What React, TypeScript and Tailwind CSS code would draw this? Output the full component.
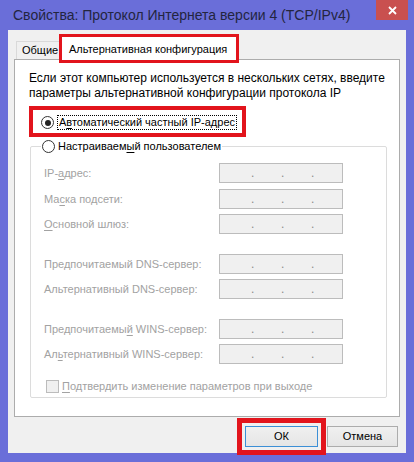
import React from "react";

const font = { fontFamily: '"Liberation Sans", "Noto Sans", sans-serif' };

function IpField() {
  return (
    <div className="w-[124px] h-[20px] border border-[#bcbcbc] bg-[#f0f0f0] flex items-end pl-[31px] pb-[3px] text-[#8a8a8a] text-[12px] leading-[12px]">
      <span className="w-[30px]">.</span>
      <span className="w-[30px]">.</span>
      <span className="w-[30px]">.</span>
    </div>
  );
}

function Row({ label, mt }: { label: React.ReactNode; mt: string }) {
  return (
    <div className={`flex items-center h-[20px] ${mt}`}>
      <div className="w-[188px] pl-[13px] text-[#a2a2a2] whitespace-nowrap">{label}</div>
      <IpField />
    </div>
  );
}

function Radio({ checked }: { checked?: boolean }) {
  return (
    <span className="w-[13px] h-[13px] rounded-full border border-[#333] bg-white flex items-center justify-center shrink-0">
      {checked && <span className="w-[6px] h-[6px] rounded-full bg-[#222]" />}
    </span>
  );
}

export default function App() {
  return (
    <div className="w-[414px] h-[462px] bg-[#6a6ed9] flex flex-col text-[11px] leading-[15px] text-black" style={font}>
      {/* TITLE BAR */}
      <div className="h-[30px] flex items-start shrink-0">
        <div className="pl-[13px] pt-[5px] text-[14px] leading-[20px] text-[#23253f] whitespace-nowrap">
          Свойства: Протокол Интернета версии 4 (TCP/IPv4)
        </div>
        <div className="ml-auto mr-[6px] w-[32px] h-[20px] bg-[#c9504f] flex items-center justify-center">
          <svg width="9" height="9" viewBox="0 0 9 9">
            <path d="M1 1 L8 8 M8 1 L1 8" stroke="white" strokeWidth="1.8" />
          </svg>
        </div>
      </div>

      {/* CLIENT */}
      <div className="mx-[8px] h-[423px] bg-[#f0f0f0] flex flex-col shrink-0">
        {/* tabs */}
        <div className="flex items-end h-[29px] pl-[8px] relative z-10">
          <div className="w-[45px] h-[18px] border border-b-0 border-[#d9d9d9] bg-[#f0f0f0] pl-[5px] leading-[17px]">
            Общие
          </div>
          <div className="ml-[1px] w-[174px] h-[23px] -mb-[1px] bg-white pl-[7px] pt-[5px] outline-[3px] outline-[#e2141c] whitespace-nowrap">
            Альтернативная конфигурация
          </div>
        </div>

        {/* panel */}
        <div className="mx-[6px] h-[358px] border border-[#acacac] bg-white flex flex-col">
          <div className="pl-[14px] pt-[11px] text-[12px] whitespace-nowrap">
            <div>Если этот компьютер используется в нескольких сетях, введите</div>
            <div>параметры альтернативной конфигурации протокола IP</div>
          </div>

          <div className="ml-[18px] mt-[9px] w-[209px] h-[23px] flex items-center gap-[3px] pl-[8px] pt-[2px] outline-4 outline-offset-0 outline-[#e2141c]">
            <Radio checked />
            <span className="border border-dotted border-black px-[1px] leading-[13px] whitespace-nowrap">
              А<span className="underline underline-offset-[2px]">в</span>томатический частный IP-адрес
            </span>
          </div>

          <fieldset className="ml-[15px] mr-[12px] mt-[5px] border border-[#dcdcdc] rounded-[2px] px-[10px] pb-[4px] text-[#a2a2a2]">
            <legend className="px-[1px] flex items-center gap-[3px] text-black leading-[16px] whitespace-nowrap">
              <Radio />
              <span>
                Настраиваем<span className="underline underline-offset-[2px]">ы</span>й пользователем
              </span>
            </legend>
            <div className="-mx-[10px]">
              <Row mt="mt-[9px]" label={<>IP-<span className="underline underline-offset-[2px]">а</span>дрес:</>} />
              <Row mt="mt-[6px]" label={<>Ма<span className="underline underline-offset-[2px]">с</span>ка подсети:</>} />
              <Row mt="mt-[5px]" label={<><span className="underline underline-offset-[2px]">О</span>сновной шлюз:</>} />
              <Row mt="mt-[20px]" label={<>Пре<span className="underline underline-offset-[2px]">д</span>почитаемый DNS-сервер:</>} />
              <Row mt="mt-[5px]" label={<>Альтернативный DNS-сервер:</>} />
              <Row mt="mt-[20px]" label={<>Предпочитаемы<span className="underline underline-offset-[2px]">й</span> WINS-сервер:</>} />
              <Row mt="mt-[5px]" label={<>Ал<span className="underline underline-offset-[2px]">ь</span>тернативный WINS-сервер:</>} />
              <div className="flex items-center gap-[3px] pl-[15px] mt-[16px] h-[13px] whitespace-nowrap">
                <span className="w-[13px] h-[13px] border border-[#bcbcbc] bg-[#f0f0f0] shrink-0" />
                <span>
                  <span className="underline underline-offset-[2px]">П</span>одтвердить изменение параметров при выходе
                </span>
              </div>
            </div>
          </fieldset>
        </div>

        {/* buttons */}
        <div className="flex justify-end gap-[9px] mr-[8px] mt-[9px]">
          <button className="w-[73px] h-[21px] border border-[#3c8fd6] bg-gradient-to-b from-[#f0f0f0] to-[#e5e5e5] outline-[5px] outline-offset-[3px] outline-[#e2141c]">
            ОК
          </button>
          <button className="w-[71px] h-[21px] border border-[#acacac] bg-gradient-to-b from-[#f0f0f0] to-[#e5e5e5]">
            Отмена
          </button>
        </div>
      </div>
    </div>
  );
}
